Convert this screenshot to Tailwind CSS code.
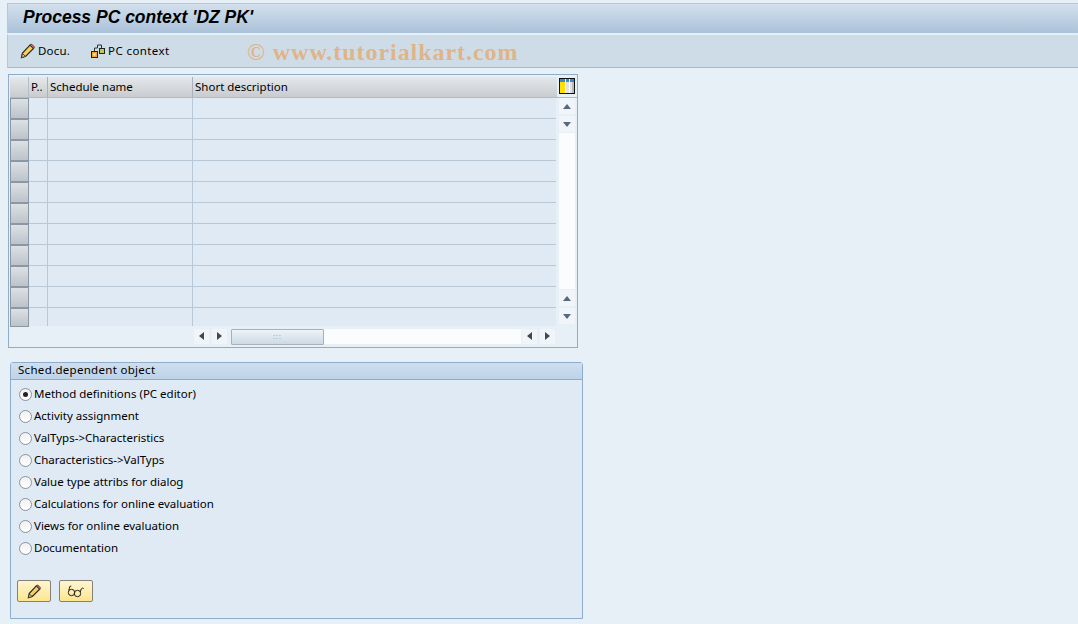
<!DOCTYPE html>
<html lang="en">
<head>
  <meta charset="UTF-8" />
  <title>Process PC context</title>
  <script src="https://cdn.jsdelivr.net/npm/@tailwindcss/browser@4"></script>
</head>
<body class="bg-[#e8f0f7] font-['Noto_Sans',sans-serif] text-[11.5px] text-black overflow-hidden">
  <div class="w-[1078px] h-[624px] pt-[3px] overflow-hidden">

    <!-- Title bar -->
    <div class="ml-[7px] h-[30px] border-t border-l border-[#b4c6d8] bg-gradient-to-b from-[#d3e0ec] to-[#aac2da] pl-[15px] flex items-center">
      <h1 class="font-['Liberation_Sans',sans-serif] font-bold italic text-[17.500px] text-black -mt-[2px]">Process PC context 'DZ PK'</h1>
    </div>

    <!-- Toolbar -->
    <div class="relative ml-[7px] mt-[1px] h-[34px] border-t border-l border-b border-t-[#e6eef5] border-l-[#b4c6d8] border-b-[#a3bbd2] bg-[#cedce8] flex items-center pl-[12px]">
      <div class="flex items-center gap-[2px]">
        <svg width="16" height="16" viewBox="0 0 16 16"><path d="M1.500 14.500l1-4.500 7.500-8 3.500 3.500-7.500 7.500z" fill="#f7cf5a" stroke="#2a2a2a" stroke-width="1.200"/><path d="M1.500 14.500l1-4 3 3z" fill="#e8c9a0" stroke="#2a2a2a" stroke-width=".8"/><path d="M10 2l1.500-1 3 3-1 1.500z" fill="#d9706a" stroke="#2a2a2a" stroke-width=".8"/></svg>
        <span class="tracking-[0.2px]">Docu.</span>
      </div>
      <div class="flex items-center gap-[1px] ml-[20px]">
        <svg width="17" height="16" viewBox="0 0 17 16"><path d="M4.500 8V5H7.500V2H11.500V5" fill="none" stroke="#333"/><rect x="1.500" y="8.500" width="6" height="6" fill="#f3a827" stroke="#222"/><rect x="3.500" y="10.500" width="2" height="2" fill="#fff3d0"/><rect x="9.500" y="5.500" width="5" height="5" fill="#b5cf55" stroke="#222"/></svg>
        <span class="tracking-[0.4px]">PC context</span>
      </div>
      <div class="absolute left-[239px] -top-[1px] font-['Liberation_Serif',serif] font-bold text-[24px] tracking-[0.95px] text-[#e8a25c]/70 whitespace-nowrap">© www.tutorialkart.com</div>
    </div>

    <!-- Table -->
    <div class="ml-[8px] mt-[6px] w-[570px] h-[274px] border border-[#8fadcb] bg-[#e8f0f7] pt-[2px] pl-[1px]">
      <div id="head" class="flex h-[21px] bg-gradient-to-b from-[#e6e8ea] to-[#c8ccd0] border-b border-[#aebccb]">
        <div class="w-[19px] border-r border-[#b5bfc9]"></div>
        <div class="w-[19px] pl-[2px] border-r border-[#a8b2bc] leading-[20px] overflow-hidden">P..</div>
        <div class="w-[145px] pl-[2px] border-r border-[#a8b2bc] leading-[20px]">Schedule name</div>
        <div class="flex-1 pl-[2px] leading-[20px]">Short description</div>
        <div class="w-[20px] bg-[#e8f0f7] flex justify-center pt-[1px]">
          <svg width="16" height="16" viewBox="0 0 16 16" shape-rendering="crispEdges"><rect width="16" height="16" fill="#111"/><rect x="1" y="1" width="14" height="14" fill="#dfe3e6"/><rect x="1" y="1" width="14" height="3" fill="#3c86c6"/><rect x="1" y="4" width="5" height="11" fill="#ffe000"/><rect x="6" y="1" width="1" height="14" fill="#fff"/><rect x="10" y="1" width="1" height="14" fill="#fff"/><rect x="13" y="4" width="2" height="11" fill="#b8bcc0"/></svg>
        </div>
      </div>
      <div class="flex">
        <div id="rows" class="w-[546px]"></div>
        <!-- Vertical scrollbar -->
        <div class="w-[21px] h-[229px] flex flex-col items-center">
          <div class="w-[16px] h-[16px] bg-[#f1f5f9] flex items-center justify-center"><div class="border-x-[4px] border-b-[5px] border-x-transparent border-b-[#56697c]"></div></div>
          <div class="mt-[2px] w-[16px] h-[16px] bg-[#f1f5f9] flex items-center justify-center"><div class="border-x-[4px] border-t-[5px] border-x-transparent border-t-[#56697c]"></div></div>
          <div class="mt-[1px] w-[16px] flex-1 bg-[#fbfcfd]"></div>
          <div class="mt-[1px] w-[16px] h-[16px] bg-[#f1f5f9] flex items-center justify-center"><div class="border-x-[4px] border-b-[5px] border-x-transparent border-b-[#56697c]"></div></div>
          <div class="mt-[2px] mb-[3px] w-[16px] h-[16px] bg-[#f1f5f9] flex items-center justify-center"><div class="border-x-[4px] border-t-[5px] border-x-transparent border-t-[#56697c]"></div></div>
        </div>
      </div>
      <!-- Horizontal scrollbar -->
      <div class="flex items-center h-[16px] mt-[1px] pl-[184px]">
        <div class="w-[15px] h-[15px] bg-[#f1f5f9] flex items-center justify-center"><div class="border-y-[4px] border-r-[5px] border-y-transparent border-r-[#3c4a58]"></div></div>
        <div class="ml-[3px] w-[15px] h-[15px] bg-[#f1f5f9] flex items-center justify-center"><div class="border-y-[4px] border-l-[5px] border-y-transparent border-l-[#3c4a58]"></div></div>
        <div class="ml-[4px] w-[290px] h-[15px] bg-[#fbfcfd]">
          <div class="w-[93px] h-[16px] border border-[#a9b1b8] rounded-[1px] bg-gradient-to-b from-[#eef3f7] to-[#ccdae5] flex items-center justify-center text-[#9aa5af] text-[7px] leading-none tracking-[1px]">:::</div>
        </div>
        <div class="ml-[1px] w-[15px] h-[15px] bg-[#f1f5f9] flex items-center justify-center"><div class="border-y-[4px] border-r-[5px] border-y-transparent border-r-[#3c4a58]"></div></div>
        <div class="ml-[3px] w-[15px] h-[15px] bg-[#f1f5f9] flex items-center justify-center"><div class="border-y-[4px] border-l-[5px] border-y-transparent border-l-[#3c4a58]"></div></div>
      </div>
    </div>

    <!-- Group box -->
    <div class="ml-[10px] mt-[14px] w-[573px] h-[257px] border border-[#8fadcb] rounded-t-[3px] bg-[#dfeaf4]">
      <div class="h-[17px] pl-[7px] bg-gradient-to-b from-[#cfdfee] to-[#bdd3e8] border-b border-[#8fadcb] leading-[14px] tracking-[0.3px]">Sched.dependent object</div>
      <div id="radios" class="pt-[3px] pl-[8px]"></div>
      <div class="flex gap-[8px] pl-[6px] mt-[21px]">
        <button class="w-[34px] h-[22px] border border-[#85807a] rounded-[2px] bg-gradient-to-b from-[#fff6cf] to-[#fde58f] flex items-center justify-center">
          <svg width="15" height="15" viewBox="0 0 16 16"><path d="M1.500 14.500l1-4.500 7.500-8 3.500 3.500-7.500 7.500z" fill="#f7cf5a" stroke="#2a2a2a" stroke-width="1.300"/><path d="M1.500 14.500l1-4 3 3z" fill="#e8c9a0" stroke="#2a2a2a" stroke-width=".8"/><path d="M10 2l1.500-1 3 3-1 1.500z" fill="#d9706a" stroke="#2a2a2a" stroke-width=".8"/></svg>
        </button>
        <button class="w-[34px] h-[22px] border border-[#85807a] rounded-[2px] bg-gradient-to-b from-[#fff6cf] to-[#fde58f] flex items-center justify-center">
          <svg width="18" height="14" viewBox="0 0 18 14" fill="none" stroke="#222"><circle cx="4.500" cy="8.500" r="3.200"/><circle cx="10.500" cy="9.500" r="3.200"/><path d="M1.800 6.500l1-4 1.500-.5M13.200 8l1-3q1-1.500 2.500-.5"/></svg>
        </button>
      </div>
    </div>
  </div>

  <script>
    const rows = document.getElementById("rows");
    for (let i = 0; i < 11; i++) {
      const h = i === 10 ? "h-[18px]" : "h-[21px] border-b border-[#b9c8d6]";
      rows.insertAdjacentHTML("beforeend", `
        <div class="flex bg-[#dfeaf4] ${h}">
          <div class="w-[19px] shrink-0 ${i === 10 ? "h-[19px]" : "h-[21px]"} border border-[#8b97a3] bg-gradient-to-b from-[#dde1e5] to-[#bcc3ca]"></div>
          <div class="w-[19px] shrink-0 border-r border-[#b9c8d6]"></div>
          <div class="w-[145px] shrink-0 border-r border-[#b9c8d6]"></div>
        </div>`);
    }

    const labels = [
      "Method definitions (PC editor)",
      "Activity assignment",
      "ValTyps->Characteristics",
      "Characteristics->ValTyps",
      "Value type attribs for dialog",
      "Calculations for online evaluation",
      "Views for online evaluation",
      "Documentation"
    ];
    const radios = document.getElementById("radios");
    labels.forEach((label, i) => {
      const dot = i === 0 ? '<div class="w-[5px] h-[5px] rounded-full bg-[#222]"></div>' : "";
      radios.insertAdjacentHTML("beforeend", `
        <div class="flex items-center h-[22px]">
          <div class="w-[13px] h-[13px] mr-[2px] rounded-full border border-[#8a949e] bg-gradient-to-b from-[#f0f0f0] to-white flex items-center justify-center">${dot}</div>
          <span class="leading-[22px]">${label}</span>
        </div>`);
    });
  </script>
</body>
</html>
